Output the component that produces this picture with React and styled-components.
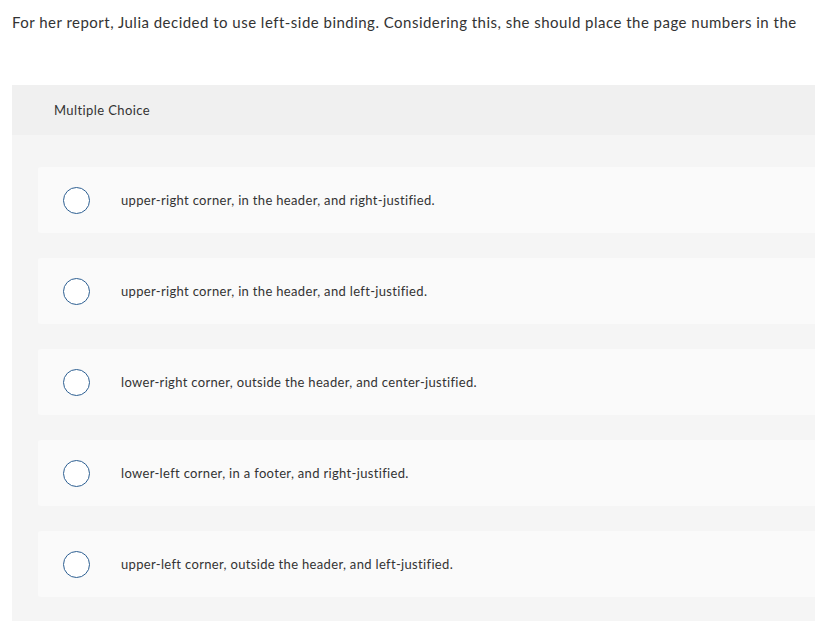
import styled, { createGlobalStyle } from "styled-components";

const GlobalStyle = createGlobalStyle`
   html, body {
      margin: 0;
      padding: 0;
      background: #ffffff;
      overflow: hidden;
   }
   body {
      font-family: "Lato", "Open Sans", Arial, sans-serif;
      color: #333333;
   }
`;

const Page = styled.div`
   width: 815px;
   height: 622px;
   overflow: hidden;
`;

const Question = styled.p`
   margin: 0;
   padding: 12px 0 0 12px;
   font-size: 15px;
   line-height: 20px;
   letter-spacing: 0.48px;
   color: #333333;
   white-space: nowrap;
`;

const Panel = styled.section`
   margin: 53px 0 0 12px;
   width: 830px;
   background: #f5f5f5;
`;

const PanelHeader = styled.div`
   height: 50px;
   display: flex;
   align-items: center;
   padding-left: 42px;
   background: #f0f0f0;
   font-size: 13px;
   letter-spacing: 0.4px;
   color: #333333;
`;

const Choices = styled.div`
   display: flex;
   flex-direction: column;
   gap: 25px;
   padding: 32px 0 24px 26px;
`;

const Choice = styled.label`
   display: flex;
   align-items: center;
   height: 66px;
   padding-left: 25px;
   background: #fafafa;
   border-radius: 3px 0 0 3px;
   font-size: 13px;
   letter-spacing: 0.33px;
   color: #333333;
   cursor: pointer;
`;

const Radio = styled.span`
   flex: none;
   width: 25px;
   height: 25px;
   border-radius: 50%;
   border: 1.5px solid #2d5f92;
   background: #ffffff;
   margin-right: 31px;
`;

const choices = [
   "upper-right corner, in the header, and right-justified.",
   "upper-right corner, in the header, and left-justified.",
   "lower-right corner, outside the header, and center-justified.",
   "lower-left corner, in a footer, and right-justified.",
   "upper-left corner, outside the header, and left-justified.",
];

const App = () => (
   <Page>
      <GlobalStyle />
      <Question>
         For her report, Julia decided to use left-side binding. Considering this, she should place the page numbers in the
      </Question>
      <Panel>
         <PanelHeader>Multiple Choice</PanelHeader>
         <Choices>
            {choices.map((text) => (
               <Choice key={text}>
                  <Radio />
                  <span>{text}</span>
               </Choice>
            ))}
         </Choices>
      </Panel>
   </Page>
);

export default App;
